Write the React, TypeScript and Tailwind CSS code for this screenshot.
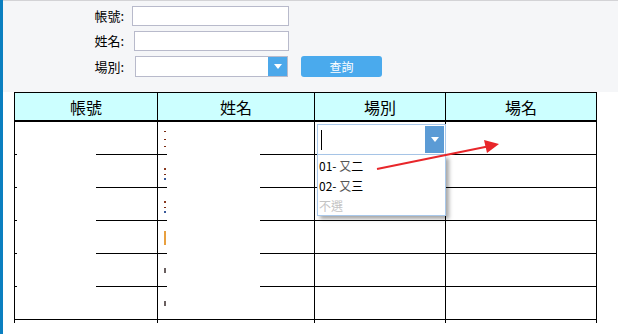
const cols = ["帳號", "姓名", "場別", "場名"];

// tiny slivers of the name column that show past the white cover
const marks: { top: number; h: number; color: string }[][] = [
  [
    { top: 9, h: 1, color: "#7a2a10" },
    { top: 17, h: 1, color: "#7a2a10" },
    { top: 24, h: 1, color: "#7a2a10" },
  ],
  [
    { top: 13, h: 2, color: "#8a3a20" },
    { top: 19, h: 1, color: "#7a2a10" },
    { top: 23, h: 2, color: "#3a5a9a" },
  ],
  [
    { top: 13, h: 2, color: "#8a3a20" },
    { top: 19, h: 1, color: "#7a2a10" },
    { top: 23, h: 2, color: "#3a5a9a" },
  ],
  [{ top: 10, h: 14, color: "#e8a040" }],
  [{ top: 14, h: 5, color: "#6a6060" }],
  [{ top: 14, h: 5, color: "#6a6060" }],
];

function Caret({ color = "white" }: { color?: string }) {
  return (
    <div
      className="h-0 w-0 border-x-[4px] border-t-[5px] border-x-transparent"
      style={{ borderTopColor: color }}
    />
  );
}

export default function App() {
  return (
    <div className="relative flex h-[334px] w-[618px] overflow-hidden bg-white font-['Noto_Sans_CJK_TC','Noto_Sans',sans-serif] text-black">
      <div className="w-[3px] shrink-0 bg-[#0b7fc0]" />

      <div className="flex flex-1 flex-col">
        {/* search form */}
        <div className="flex h-[92px] flex-col gap-[5px] border-t border-[#d3d3d6] bg-[#f5f6f8] pt-[5px] text-[13px]">
          <div className="flex h-[20px] items-center">
            <span className="w-[121px] text-right">帳號:</span>
            <div className="ml-[8px] h-[20px] w-[157px] border border-[#b8bacb] bg-white" />
          </div>
          <div className="flex h-[20px] items-center">
            <span className="w-[121px] text-right">姓名:</span>
            <div className="ml-[10px] h-[20px] w-[155px] border border-[#b8bacb] bg-white" />
          </div>
          <div className="flex h-[21px] items-center">
            <span className="w-[121px] text-right">場別:</span>
            <div className="ml-[11px] flex h-[21px] w-[153px] border border-[#b8bacb] bg-white">
              <div className="flex-1" />
              <div className="flex w-[19px] items-center justify-center bg-[#4ca8ea]">
                <Caret />
              </div>
            </div>
            <button className="ml-[13px] h-[21px] w-[81px] rounded-[3px] bg-[#4aaaed] text-[12px] text-white">
              查詢
            </button>
          </div>
        </div>

        {/* result table */}
        <div className="relative ml-[11px] w-[583px] border-l border-t border-black">
          <div className="grid h-[29px] grid-cols-[143px_157px_131px_151px] border-b-2 border-black bg-[#ccffff]">
            {cols.map((c) => (
              <div
                key={c}
                className="flex items-center justify-center border-r border-black text-[16px]"
              >
                {c}
              </div>
            ))}
          </div>

          {marks.map((m, i) => (
            <div
              key={i}
              className="grid h-[33px] grid-cols-[143px_157px_131px_151px] border-b border-black"
            >
              <div className="border-r border-black" />
              <div className="relative border-r border-black">
                {m.map((k, j) => (
                  <div
                    key={j}
                    className="absolute left-[6px] w-[2px]"
                    style={{ top: k.top, height: k.h, backgroundColor: k.color }}
                  />
                ))}
                {i === 0 && (
                  <>
                    <div className="absolute left-[27px] top-[9px] h-[1px] w-[1px] bg-[#1a3a8a]" />
                    <div className="absolute left-[34px] top-[9px] h-[1px] w-[1px] bg-[#2a7ac0]" />
                  </>
                )}
              </div>
              <div className="border-r border-black" />
              <div className="border-r border-black" />
            </div>
          ))}

          <div className="grid h-[3px] grid-cols-[143px_157px_131px_151px]">
            <div className="border-r border-black" />
            <div className="border-r border-black" />
            <div className="border-r border-black" />
            <div className="border-r border-black" />
          </div>

          {/* white covers over hidden columns */}
          <div className="absolute left-[2px] top-[30px] h-[196px] w-[79px] bg-white" />
          <div className="absolute left-[152px] top-[30px] h-[196px] w-[93px] bg-white" />

          {/* open 場別 dropdown */}
          <div className="absolute left-[302px] top-[31px] z-10 w-[129px]">
            <div className="flex h-[31px] border border-[#a9c8ea] bg-white p-[1px]">
              <div className="flex-1 pl-[2px] pt-[4px]">
                <div className="h-[20px] w-[1px] bg-black" />
              </div>
              <div className="flex w-[19px] items-center justify-center bg-[#5b9bd5]">
                <Caret />
              </div>
            </div>
            <div className="h-[61px] border border-t-0 border-[#a9c8ea] bg-white pl-[1px] pt-[1px] text-[12px] leading-[20px] shadow-[3px_3px_4px_rgba(0,0,0,0.35)]">
              <div>
                01- <span className="text-[#555]">又</span>二
              </div>
              <div>
                02- <span className="text-[#555]">又</span>三
              </div>
              <div className="text-[#c4c4c4]">不選</div>
            </div>
          </div>
        </div>
      </div>

      <svg
        className="pointer-events-none absolute left-0 top-0 z-20"
        width="618"
        height="334"
      >
        <line x1="377" y1="169" x2="490" y2="146" stroke="#e8262a" strokeWidth="2" />
        <polygon points="499,144 484,140 487,153" fill="#e8262a" />
      </svg>
    </div>
  );
}
